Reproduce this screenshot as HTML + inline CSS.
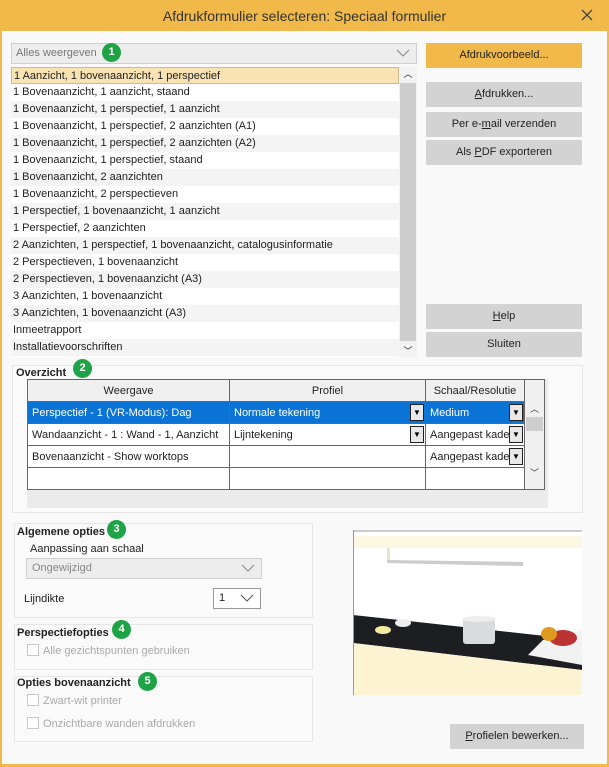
<!DOCTYPE html><html><head><style>
*{box-sizing:border-box;margin:0;padding:0}
body{width:609px;height:767px;background:#f0b94a;font-family:"Liberation Sans",sans-serif;font-size:11px;color:#222;position:relative;overflow:hidden}
.win{position:absolute;left:2px;top:31px;width:605px;height:733px;background:#f9f9f9}
.title{position:absolute;left:0;top:0;width:609px;height:31px;text-align:center;line-height:33px;font-size:14px;color:#333}
.a{position:absolute}
.btn{position:absolute;left:426px;width:156px;background:#d3d3d3;text-align:center;font-size:11px;color:#222}
.badge{position:absolute;width:19px;height:19px;border-radius:50%;background:#1fa347;color:#fff;font-weight:bold;font-size:11px;text-align:center;line-height:19px}
.row{height:17px;line-height:17px;padding-left:2px;white-space:nowrap}
.grp{position:absolute;border:1px solid #e6e6e6;background:#fafafa}
.lbl{position:absolute;font-weight:bold;font-size:11px}
.cb{display:inline-block;width:12px;height:12px;border:1px solid #c8c8c8;vertical-align:-2px;margin-right:4px;background:#fff}
.dis{color:#aaa}
table{border-collapse:collapse;table-layout:fixed}
td{border:1px solid #666;height:22px;padding-left:4px;position:relative;white-space:nowrap;overflow:hidden}
.dd{position:absolute;right:1px;top:2px;width:14px;height:17px;background:#e8e8e8;border:1px solid #222;font-size:8px;text-align:center;line-height:16px;color:#000}
.chev{position:absolute;right:6px;top:5px}
</style></head><body>
<div class="title">Afdrukformulier selecteren: Speciaal formulier</div>
<svg class="a" style="left:581px;top:9px" width="12" height="12"><path d="M1 1L11 11M11 1L1 11" stroke="#444" stroke-width="1.3"/></svg>
<div class="win"></div>
<div class="a" style="left:11px;top:43px;width:406px;height:21px;background:#ededed;border:1px solid #cfcfcf;color:#777;line-height:19px;padding-left:4px;font-size:11px">Alles weergeven<svg class="chev" width="14" height="8"><path d="M1 1L7 7L13 1" fill="none" stroke="#888"/></svg></div>
<div class="badge" style="left:102px;top:43px">1</div>
<div class="btn" style="top:43px;height:25px;line-height:25px;background:#f0b94a">Afdrukvoorbeeld...</div>
<div class="btn" style="top:82px;height:25px;line-height:25px"><u>A</u>fdrukken...</div>
<div class="btn" style="top:112px;height:25px;line-height:25px">Per e-<u>m</u>ail verzenden</div>
<div class="btn" style="top:140px;height:25px;line-height:25px">Als <u>P</u>DF exporteren</div>
<div class="btn" style="top:304px;height:25px;line-height:25px"><u>H</u>elp</div>
<div class="btn" style="top:332px;height:25px;line-height:25px">Sluiten</div>
<div class="a" style="left:11px;top:67px;width:388px;height:290px;background:#fff;font-size:11px">
<div class="row" style="background:#f9e3b3;border:1px solid #d4b98a">1 Aanzicht, 1 bovenaanzicht, 1 perspectief</div>
<div class="row">1 Bovenaanzicht, 1 aanzicht, staand</div>
<div class="row" style="background:#f4f4f4">1 Bovenaanzicht, 1 perspectief, 1 aanzicht</div>
<div class="row">1 Bovenaanzicht, 1 perspectief, 2 aanzichten (A1)</div>
<div class="row" style="background:#f4f4f4">1 Bovenaanzicht, 1 perspectief, 2 aanzichten (A2)</div>
<div class="row">1 Bovenaanzicht, 1 perspectief, staand</div>
<div class="row" style="background:#f4f4f4">1 Bovenaanzicht, 2 aanzichten</div>
<div class="row">1 Bovenaanzicht, 2 perspectieven</div>
<div class="row" style="background:#f4f4f4">1 Perspectief, 1 bovenaanzicht, 1 aanzicht</div>
<div class="row">1 Perspectief, 2 aanzichten</div>
<div class="row" style="background:#f4f4f4">2 Aanzichten, 1 perspectief, 1 bovenaanzicht, catalogusinformatie</div>
<div class="row">2 Perspectieven, 1 bovenaanzicht</div>
<div class="row" style="background:#f4f4f4">2 Perspectieven, 1 bovenaanzicht (A3)</div>
<div class="row">3 Aanzichten, 1 bovenaanzicht</div>
<div class="row" style="background:#f4f4f4">3 Aanzichten, 1 bovenaanzicht (A3)</div>
<div class="row">Inmeetrapport</div>
<div class="row" style="background:#f4f4f4">Installatievoorschriften</div>
</div>
<div class="a" style="left:399px;top:67px;width:18px;height:290px;background:#f2f2f2"><div style="position:absolute;left:1px;top:16px;width:16px;height:258px;background:#cdcdcd"></div><div style="position:absolute;top:0;width:18px;text-align:center;font-size:9px">︿</div><div style="position:absolute;bottom:0;width:18px;text-align:center;font-size:9px">﹀</div></div>
<div class="grp" style="left:12px;top:365px;width:571px;height:148px"></div>
<div class="lbl" style="left:16px;top:367px">Overzicht</div>
<div class="badge" style="left:73px;top:359px">2</div>
<div class="a" style="left:27px;top:379px;width:521px;height:129px;background:#ebebeb"></div>
<table class="a" style="left:27px;top:379px;width:517px;background:#fff;font-size:11px">
<colgroup><col style="width:202px"><col style="width:196px"><col style="width:99px"><col style="width:20px"></colgroup>
<tr style="background:#f0f0f0;text-align:center"><td style="height:20px;padding:0">Weergave</td><td style="padding:0">Profiel</td><td style="padding:0">Schaal/Resolutie</td><td style="border-bottom:none"></td></tr>
<tr style="background:#0a74d6;color:#fff"><td>Perspectief - 1 (VR-Modus): Dag</td><td>Normale tekening<span class="dd">▼</span></td><td>Medium<span class="dd">▼</span></td><td rowspan="4" style="background:#f0f0f0;color:#333;font-size:9px;vertical-align:top;padding:0;text-align:center;border-top:none">︿<div style="height:14px;background:#cdcdcd;margin:2px 1px 35px"></div>﹀</td></tr>
<tr><td>Wandaanzicht - 1 : Wand - 1, Aanzicht</td><td>Lijntekening<span class="dd">▼</span></td><td>Aangepast kade<span class="dd">▼</span></td></tr>
<tr><td>Bovenaanzicht - Show worktops</td><td></td><td>Aangepast kade<span class="dd">▼</span></td></tr>
<tr><td style="height:20px"></td><td></td><td></td></tr>
</table>
<div class="grp" style="left:14px;top:523px;width:299px;height:95px"></div>
<div class="lbl" style="left:17px;top:526px">Algemene opties</div>
<div class="badge" style="left:107px;top:520px">3</div>
<div class="a" style="left:30px;top:543px;font-size:11px">Aanpassing aan schaal</div>
<div class="a" style="left:26px;top:558px;width:236px;height:21px;background:#ededed;border:1px solid #cfcfcf;color:#888;line-height:19px;padding-left:5px;font-size:11px">Ongewijzigd<svg class="chev" width="14" height="8"><path d="M1 1L7 7L13 1" fill="none" stroke="#888"/></svg></div>
<div class="a" style="left:24px;top:593px;font-size:11px">Lijndikte</div>
<div class="a" style="left:213px;top:588px;width:48px;height:21px;border:1px solid #999;background:#fff;line-height:19px;padding-left:5px;font-size:11px">1<svg class="chev" width="14" height="8"><path d="M1 1L7 7L13 1" fill="none" stroke="#555"/></svg></div>
<div class="grp" style="left:14px;top:624px;width:299px;height:46px"></div>
<div class="lbl" style="left:17px;top:627px">Perspectiefopties</div>
<div class="badge" style="left:112px;top:620px">4</div>
<div class="a dis" style="left:27px;top:644px;font-size:11px"><span class="cb"></span>Alle gezichtspunten gebruiken</div>
<div class="grp" style="left:14px;top:676px;width:299px;height:66px"></div>
<div class="lbl" style="left:17px;top:677px">Opties bovenaanzicht</div>
<div class="badge" style="left:138px;top:672px">5</div>
<div class="a dis" style="left:27px;top:694px;font-size:11px"><span class="cb"></span>Zwart-wit printer</div>
<div class="a dis" style="left:27px;top:717px;font-size:11px"><span class="cb"></span>Onzichtbare wanden afdrukken</div>
<svg class="a" style="left:353px;top:530px" width="229" height="165" viewBox="0 0 229 165">
<rect width="229" height="165" fill="#fff"/>
<rect x="0" y="6" width="229" height="12" fill="#fbf7e2"/>
<rect x="34" y="18" width="3" height="12" fill="#e8e4cc"/>
<polygon points="34,30 170,32 170,36 34,33" fill="#ccc"/>
<polygon points="0,85 229,110 229,140 0,113" fill="#1d1e22"/>
<polygon points="0,113 229,140 229,165 0,165" fill="#fbf3d2"/>
<polygon points="190,110 229,100 229,135 175,125" fill="#f2f2f2"/>
<rect x="110" y="88" width="32" height="26" rx="3" fill="#d8dcdc"/>
<ellipse cx="126" cy="89" rx="17" ry="3" fill="#eee"/>
<ellipse cx="30" cy="100" rx="8" ry="4" fill="#f3eca0"/>
<ellipse cx="50" cy="93" rx="8" ry="4" fill="#eee"/>
<ellipse cx="210" cy="108" rx="14" ry="8" fill="#b33"/>
<ellipse cx="196" cy="104" rx="8" ry="7" fill="#e09a20"/>
<line x1="0" y1="1" x2="229" y2="1" stroke="#999"/>
<line x1="0.5" y1="0" x2="0.5" y2="165" stroke="#999"/>
</svg>
<div class="a" style="left:450px;top:724px;width:134px;height:25px;background:#d3d3d3;text-align:center;line-height:25px;font-size:11px"><u>P</u>rofielen bewerken...</div>
</body></html>
